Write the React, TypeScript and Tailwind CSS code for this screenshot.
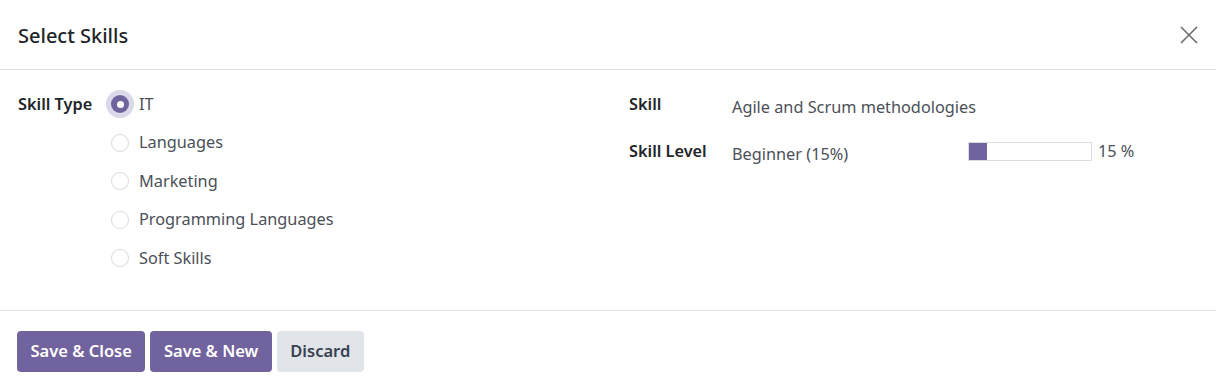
import { useState } from 'react'

const skillTypes = ['IT', 'Languages', 'Marketing', 'Programming Languages', 'Soft Skills']

export default function App() {
  const [selected, setSelected] = useState('IT')
  const level = 15

  return (
    <div className="w-[1216px] h-[390px] bg-white text-[#212529] flex flex-col" style={{ fontFamily: '"Noto Sans", "Open Sans", sans-serif' }}>
      <div className="h-[70px] shrink-0 flex items-center justify-between pl-[18px] pr-[14px] border-b border-[#dee2e6]">
        <h2 className="text-[20px] font-medium text-[#212529] mt-[2px]">Select Skills</h2>
        <button className="w-[26px] h-[26px] flex items-center justify-center text-[#6b6b6b]">
          <svg width="20" height="20" viewBox="0 0 20 20" fill="none" stroke="currentColor" strokeWidth="1.6">
            <path d="M2 2 L18 18 M18 2 L2 18" />
          </svg>
        </button>
      </div>

      <div className="flex-1 flex pt-[21px] pl-[18px]">
        <div className="w-[611px] flex">
          <label className="w-[88px] text-[16.3px] font-semibold leading-[26px]">Skill Type</label>
          <div className="flex flex-col gap-[12.5px]">
            {skillTypes.map(t => {
              const active = t === selected
              return (
                <div key={t} className="flex items-center h-[26px] cursor-pointer" onClick={() => setSelected(t)}>
                  <span className="w-[28px] h-[28px] flex items-center justify-center">
                    {active ? (
                      <span className="w-[28px] h-[28px] rounded-full bg-[#dcd8e9] flex items-center justify-center">
                        <span className="w-[18px] h-[18px] rounded-full bg-[#71639e] flex items-center justify-center">
                          <span className="w-[7px] h-[7px] rounded-full bg-white" />
                        </span>
                      </span>
                    ) : (
                      <span className="w-[18px] h-[18px] rounded-full border border-[#d7d9dd] bg-white" />
                    )}
                  </span>
                  <span className="ml-[5px] text-[16.3px] text-[#4b5058]">{t}</span>
                </div>
              )
            })}
          </div>
        </div>

        <div className="flex-1 flex flex-col gap-[21px]">
          <div className="flex items-center h-[26px]">
            <span className="w-[103px] text-[16.3px] font-semibold">Skill</span>
            <span className="text-[16.3px] text-[#4b5058] mt-[6px]">Agile and Scrum methodologies</span>
          </div>
          <div className="flex items-center h-[26px]">
            <span className="w-[103px] text-[16.3px] font-semibold">Skill Level</span>
            <span className="w-[236px] text-[16.3px] text-[#4b5058] mt-[6px]">Beginner (15%)</span>
            <div className="w-[124px] h-[19px] border border-[#dcdde3] bg-white">
              <div className="h-full bg-[#71639e]" style={{ width: `${level}%` }} />
            </div>
            <span className="ml-[6px] text-[16.3px] text-[#4b5058]">{level} %</span>
          </div>
        </div>
      </div>

      <div className="h-[80px] shrink-0 border-t border-[#dee2e6] flex items-center gap-[5px] pl-[17px] pt-[1px]">
        <button className="h-[41px] px-[13.5px] rounded-[4px] bg-[#71639e] text-white text-[16.5px] font-semibold">Save &amp; Close</button>
        <button className="h-[41px] px-[13.5px] rounded-[4px] bg-[#71639e] text-white text-[16.5px] font-semibold">Save &amp; New</button>
        <button className="h-[41px] px-[13.5px] rounded-[4px] bg-[#e1e4e8] text-[#374151] text-[16.5px] font-semibold">Discard</button>
      </div>
    </div>
  )
}
